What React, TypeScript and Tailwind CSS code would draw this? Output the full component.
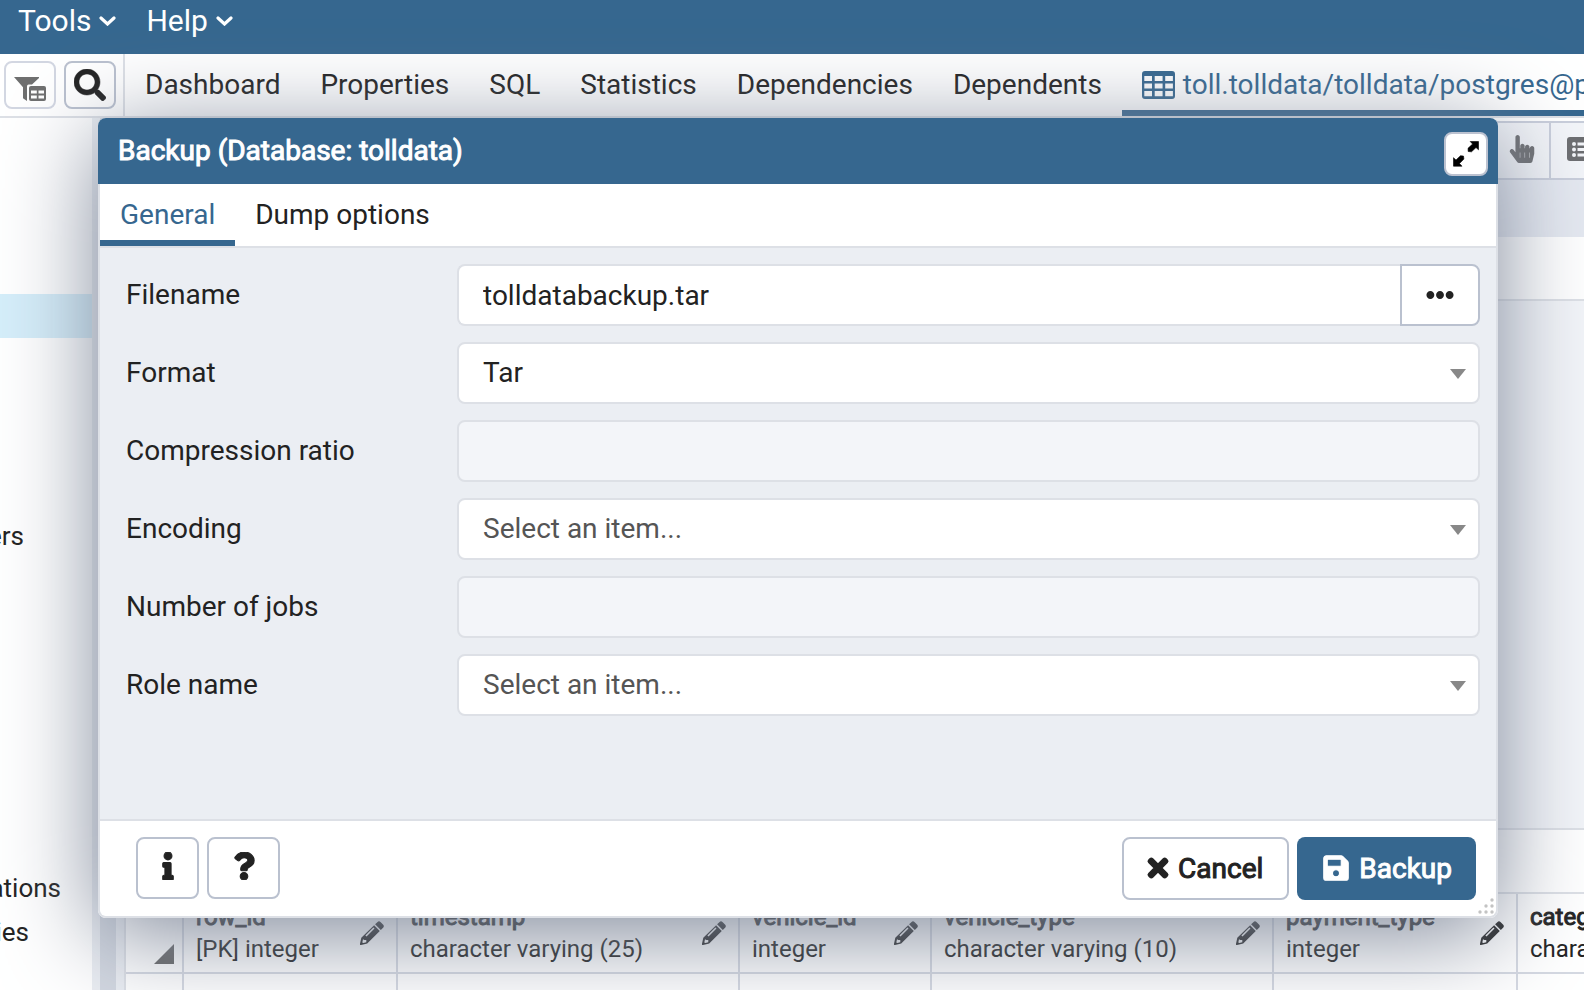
import {
  FaSearch,
  FaHandPointer,
  FaInfo,
  FaQuestion,
  FaTimes,
  FaSave,
  FaEllipsisH,
} from "react-icons/fa";

const TABS = ["Dashboard", "Properties", "SQL", "Statistics", "Dependencies", "Dependents"];

const COLUMNS = [
  { name: "row_id", type: "[PK] integer", width: "w-[214px]" },
  { name: "timestamp", type: "character varying (25)", width: "w-[342px]" },
  { name: "vehicle_id", type: "integer", width: "w-[192px]" },
  { name: "vehicle_type", type: "character varying (10)", width: "w-[342px]" },
  { name: "payment_type", type: "integer", width: "w-[244px]" },
  { name: "category", type: "character varying (20)", width: "w-[342px]" },
];

const BOLD = "[-webkit-text-stroke:1px_currentColor]";
const HEAVY = "stroke-current [stroke-width:20px]";
const FIELD = "h-[62px] w-full rounded-lg border-2 border-[#dde0e6] px-6 text-[28px] outline-none";

function ChevronIcon() {
  return (
    <svg viewBox="0 0 17 10" className="h-2.5 w-[17px] shrink-0" fill="none" stroke="currentColor" strokeWidth="3.200" strokeLinecap="round" aria-hidden="true">
      <path d="M2 2l6.500 6L15 2" />
    </svg>
  );
}

function PencilIcon() {
  return (
    <svg viewBox="0 0 24 24" className="size-6 shrink-0" fill="currentColor" aria-hidden="true">
      <path d="M17.300 1.200q1.600-1.600 3.200-.2l2.500 2.500q1.600 1.600.1 3.200l-2.300 2.200-5.700-5.600z" />
      <path fillRule="evenodd" d="M14.100 4.300l5.700 5.600L7.200 22.400 1 23.900q-1.200.2-1-1.100l1.300-6zM5.400 14.500l1.100 1 8-8-1.100-1zM3 18.200l-.7 3.200 1 .6 3-.8v-2.300H4.400z" />
    </svg>
  );
}

function FilterTableIcon() {
  return (
    <svg viewBox="0 0 32 24" className="mt-2 h-6 w-8 shrink-0" fill="#6f6f6f" aria-hidden="true">
      <path d="M0 0h25v1l-7 6.600h-3.400q-1.600 0-1.600 2V24l-4-2.800V10.200z" />
      <path fillRule="evenodd" d="M17 9h13q2 0 2 2v11q0 2-2 2H17q-2 0-2-2V11q0-2 2-2zm0 4.500v3h5.800v-3zm7.500 0v3h5.500v-3zM17 18.500v3h5.800v-3zm7.500 0v3h5.500v-3z" />
    </svg>
  );
}

function TableIcon() {
  return (
    <svg viewBox="0 0 33 28" className="h-7 w-[33px] shrink-0" aria-hidden="true">
      <path
        fill="currentColor"
        fillRule="evenodd"
        d="M3 0h27q3 0 3 3v22q0 3-3 3H3q-3 0-3-3V3q0-3 3-3zM2.300 5v5h7.700V5zm10.400 0v5h7.900V5zm10.500 0v5h7.700V5zM2.300 12.500v5h7.700v-5zm10.400 0v5h7.900v-5zm10.500 0v5h7.700v-5zM2.300 20v5.200h7.700V20zm10.400 0v5.200h7.900V20zm10.500 0v5.200h7.700V20z"
      />
    </svg>
  );
}

function MaximizeIcon() {
  return (
    <svg viewBox="0 0 26 26" className="size-[26px]" fill="#000" stroke="#000" strokeWidth="0.600" strokeLinejoin="round" aria-hidden="true">
      <path d="M17.200 0.500h8.300v8.300L23 6.500l-4.500 4.300-3.300-.3-.2-3.200L19.600 3z" />
      <path d="M0.500 16.700L3 19l4.500-4.300 3 .4.400 3L6.500 22.500l2.500 2.700H0.500z" />
    </svg>
  );
}

function ListIcon() {
  return (
    <svg viewBox="0 0 28 24" className="h-6 w-7 shrink-0" aria-hidden="true">
      <rect width="28" height="24" rx="3" fill="#6c6d70" />
      <g fill="#f4f5f9">
        <circle cx="7" cy="7" r="2" />
        <circle cx="7" cy="12.500" r="2" />
        <circle cx="7" cy="18" r="2" />
        <path d="M10.500 5.500h15v3h-15zM10.500 11h15v3h-15zM10.500 16.500h15v3h-15z" />
      </g>
    </svg>
  );
}

function SelectField({ id, label, value, muted }: { id: string; label: string; value: string; muted?: boolean }) {
  return (
    <div className="flex items-center">
      <label htmlFor={id} className="w-[331px] shrink-0">{label}</label>
      <div className="relative grow">
        <select
          id={id}
          className={`${FIELD} appearance-none bg-white ${muted ? "text-[#555]" : "text-[#222]"}`}
        >
          <option>{value}</option>
        </select>
        <svg viewBox="0 0 16 10" className="pointer-events-none absolute top-[27px] right-3.5 h-2.5 w-4" aria-hidden="true">
          <path d="M0 0h16L8 10z" fill="#888" />
        </svg>
      </div>
    </div>
  );
}

function DisabledField({ id, label }: { id: string; label: string }) {
  return (
    <div className="flex items-center">
      <label htmlFor={id} className="w-[331px] shrink-0">{label}</label>
      <input id={id} type="text" disabled className={`${FIELD} bg-[#f3f5f9]`} />
    </div>
  );
}

function BackupDialog() {
  return (
    <section
      role="dialog"
      aria-labelledby="dialog-title"
      className="absolute top-[118px] right-[86px] left-[98px] flex h-[800px] flex-col rounded-lg bg-white shadow-[0_16px_96px_rgb(125,134,152)]"
    >
      <header className="flex h-[66px] shrink-0 items-center justify-between rounded-t-lg bg-[#36678f] pr-2.5 pl-5 text-white">
        <h2 id="dialog-title" className={`text-[28px] ${BOLD}`}>Backup (Database: tolldata)</h2>
        <button aria-label="Maximize" className="mt-1.5 flex size-11 items-center justify-center rounded-lg border-2 border-[#bcc2d0] bg-white">
          <MaximizeIcon />
        </button>
      </header>
      <div className="flex grow flex-col rounded-b-lg border-2 border-t-0 border-[#dde0e6]">
        <div role="tablist" className="flex h-16 shrink-0 border-b-2 border-[#dde0e6]">
          <button role="tab" aria-selected="true" className="border-b-6 border-[#36678f] px-5 pt-1.5 text-[#36678f]">General</button>
          <button role="tab" aria-selected="false" className="px-5">Dump options</button>
        </div>
        <form className="flex grow flex-col gap-4 bg-[#ebeef3] pt-4 pr-4 pl-[26px]">
          <div className="flex items-center">
            <label htmlFor="filename" className="w-[331px] shrink-0">Filename</label>
            <div className="flex grow">
              <input id="filename" type="text" defaultValue="tolldatabackup.tar" className={`${FIELD} rounded-r-none border-r-0 bg-white`} />
              <button type="button" aria-label="Browse" className="flex h-[62px] w-20 shrink-0 items-center justify-center rounded-r-lg border-2 border-[#bac1cf] bg-white">
                <FaEllipsisH className="size-7" />
              </button>
            </div>
          </div>
          <SelectField id="format" label="Format" value="Tar" />
          <DisabledField id="compression" label="Compression ratio" />
          <SelectField id="encoding" label="Encoding" value="Select an item..." muted />
          <DisabledField id="jobs" label="Number of jobs" />
          <SelectField id="role" label="Role name" value="Select an item..." muted />
        </form>
        <footer className="relative flex h-[97px] shrink-0 items-start gap-2 rounded-b-lg border-t-2 border-[#dde0e6] bg-white pt-4 pr-5 pl-9">
          <button aria-label="Info" className="flex h-[62px] w-[63px] items-center justify-center rounded-lg border-2 border-[#bac1cf] pb-1">
            <FaInfo className={`size-7 ${HEAVY}`} />
          </button>
          <button aria-label="Help" className="flex h-[62px] w-[73px] items-center justify-center rounded-lg border-2 border-[#bac1cf] pb-1">
            <FaQuestion className={`size-7 ${HEAVY}`} />
          </button>
          <button className="ml-auto flex h-[63px] items-center gap-2.5 rounded-lg border-2 border-[#bac1cf] px-6">
            <FaTimes className="h-[30px] w-5 overflow-visible pb-0.5 stroke-current [stroke-width:30px]" />
            <span className={BOLD}>Cancel</span>
          </button>
          <button className="flex h-[63px] items-center gap-2 rounded-lg bg-[#36678f] px-6 text-white">
            <FaSave className={`size-[30px] pb-0.5 ${HEAVY}`} />
            <span className={BOLD}>Backup</span>
          </button>
          <svg viewBox="0 0 16 16" className="absolute right-0.5 bottom-0.5 size-4" fill="#c3c3c3" aria-hidden="true">
            <circle cx="14" cy="2" r="1.700" /><circle cx="8" cy="8" r="1.700" /><circle cx="14" cy="8" r="1.700" />
            <circle cx="2" cy="14" r="1.700" /><circle cx="8" cy="14" r="1.700" /><circle cx="14" cy="14" r="1.700" />
          </svg>
        </footer>
      </div>
    </section>
  );
}

export default function App() {
  return (
    <div className="relative flex h-screen flex-col overflow-hidden bg-white font-['Roboto',sans-serif] text-[28px] leading-[42px] text-[#222]">
      <nav className="flex h-[54px] shrink-0 gap-[30px] bg-[#36678f] pl-[18px] text-[30px] text-white">
        <button className="flex h-[42px] items-center gap-2">Tools <ChevronIcon /></button>
        <button className="flex h-[42px] items-center gap-2">Help <ChevronIcon /></button>
      </nav>
      <div className="flex h-16 shrink-0 border-b-2 border-[#dde0e6]">
        <div className="flex w-[125px] shrink-0 items-center gap-2 border-r-2 border-[#dde0e6] pl-1">
          <button aria-label="Filtered rows" className="flex h-12 w-[52px] items-center justify-center rounded-lg border-2 border-[#d3d7e2]">
            <FilterTableIcon />
          </button>
          <button aria-label="Search objects" className="flex h-12 w-[52px] items-center justify-center rounded-lg border-2 border-[#bac1cf]">
            <FaSearch className="size-8 stroke-current [stroke-width:8px]" />
          </button>
        </div>
        <div role="tablist" className="flex min-w-0 overflow-hidden">
          {TABS.map((t) => (
            <button key={t} role="tab" aria-selected="false" className="shrink-0 px-5">{t}</button>
          ))}
          <button role="tab" aria-selected="true" className="flex shrink-0 items-center gap-2 border-b-6 border-[#36678f] px-5 pt-1.5 whitespace-nowrap text-[#36678f]">
            <TableIcon />
            toll.tolldata/tolldata/postgres@postgres
          </button>
        </div>
      </div>
      <div className="flex min-h-0 grow">
        <aside className="w-[92px] shrink-0 overflow-hidden text-[26px]">
          <div className="mt-44 h-11 bg-[#d5eefa]" />
          <div className="mt-[176px] flex h-11 w-6 items-center justify-end">Users</div>
          <div className="mt-[308px] flex h-11 w-[61px] items-center justify-end">Aggregations</div>
          <div className="flex h-11 w-[29px] items-center justify-end">Dictionaries</div>
        </aside>
        <div className="w-8 shrink-0 border-x-8 border-[#ebeef3] bg-[#d3d8e1]" />
        <main className="flex min-w-0 grow flex-col border-l-2 border-[#dde0e6]">
          <div className="mt-[3px] flex h-[59px] shrink-0 justify-end border-y-2 border-[#c9cedb] bg-[#f3f5f9]">
            <button aria-label="Pointer" className="flex w-14 items-center justify-center border-r-2 border-[#c9cedb] pb-1 text-[#6c6d70]">
              <FaHandPointer className="size-7" />
            </button>
            <button aria-label="Rows" className="flex w-[33px] items-center overflow-hidden pb-1 pl-4">
              <ListIcon />
            </button>
          </div>
          <div className="h-[57px] shrink-0 bg-[#e5e9f1]" />
          <div className="h-16 shrink-0 border-b-2 border-[#dde0e6]" />
          <div className="min-h-0 grow bg-[#f3f5f9]" />
          <div className="h-16 shrink-0 border-t-2 border-[#dde0e6]" />
          <div className="h-[98px] shrink-0 overflow-hidden border-t-2 border-[#dde0e6]">
            <table className="w-[1734px] table-fixed border-separate border-spacing-0 text-left text-[24px] leading-8">
              <colgroup>
                <col className="w-[58px]" />
                {COLUMNS.map((c) => (
                  <col key={c.name} className={c.width} />
                ))}
              </colgroup>
              <thead>
                <tr>
                  <th aria-label="Select all" className="h-20 border-r-2 border-b-2 border-[#d5d9e2] p-0 align-bottom">
                    <svg viewBox="0 0 20 20" className="mb-2 ml-7 size-5" aria-hidden="true"><path d="M20 0v20H0z" fill="#666" /></svg>
                  </th>
                  {COLUMNS.map((c) => (
                    <th key={c.name} scope="col" className="border-r-2 border-b-2 border-[#d5d9e2] p-0 font-normal">
                      <div className="flex items-center justify-between px-3">
                        <span className="whitespace-nowrap">
                          <span className={`block ${BOLD}`}>{c.name}</span>
                          <span className="block">{c.type}</span>
                        </span>
                        <PencilIcon />
                      </div>
                    </th>
                  ))}
                </tr>
              </thead>
              <tbody>
                <tr>
                  <td className="h-10 border-r-2 border-[#d5d9e2]" />
                  {COLUMNS.map((c) => (
                    <td key={c.name} className="border-r-2 border-[#d5d9e2]" />
                  ))}
                </tr>
              </tbody>
            </table>
          </div>
        </main>
      </div>
      <BackupDialog />
    </div>
  );
}
